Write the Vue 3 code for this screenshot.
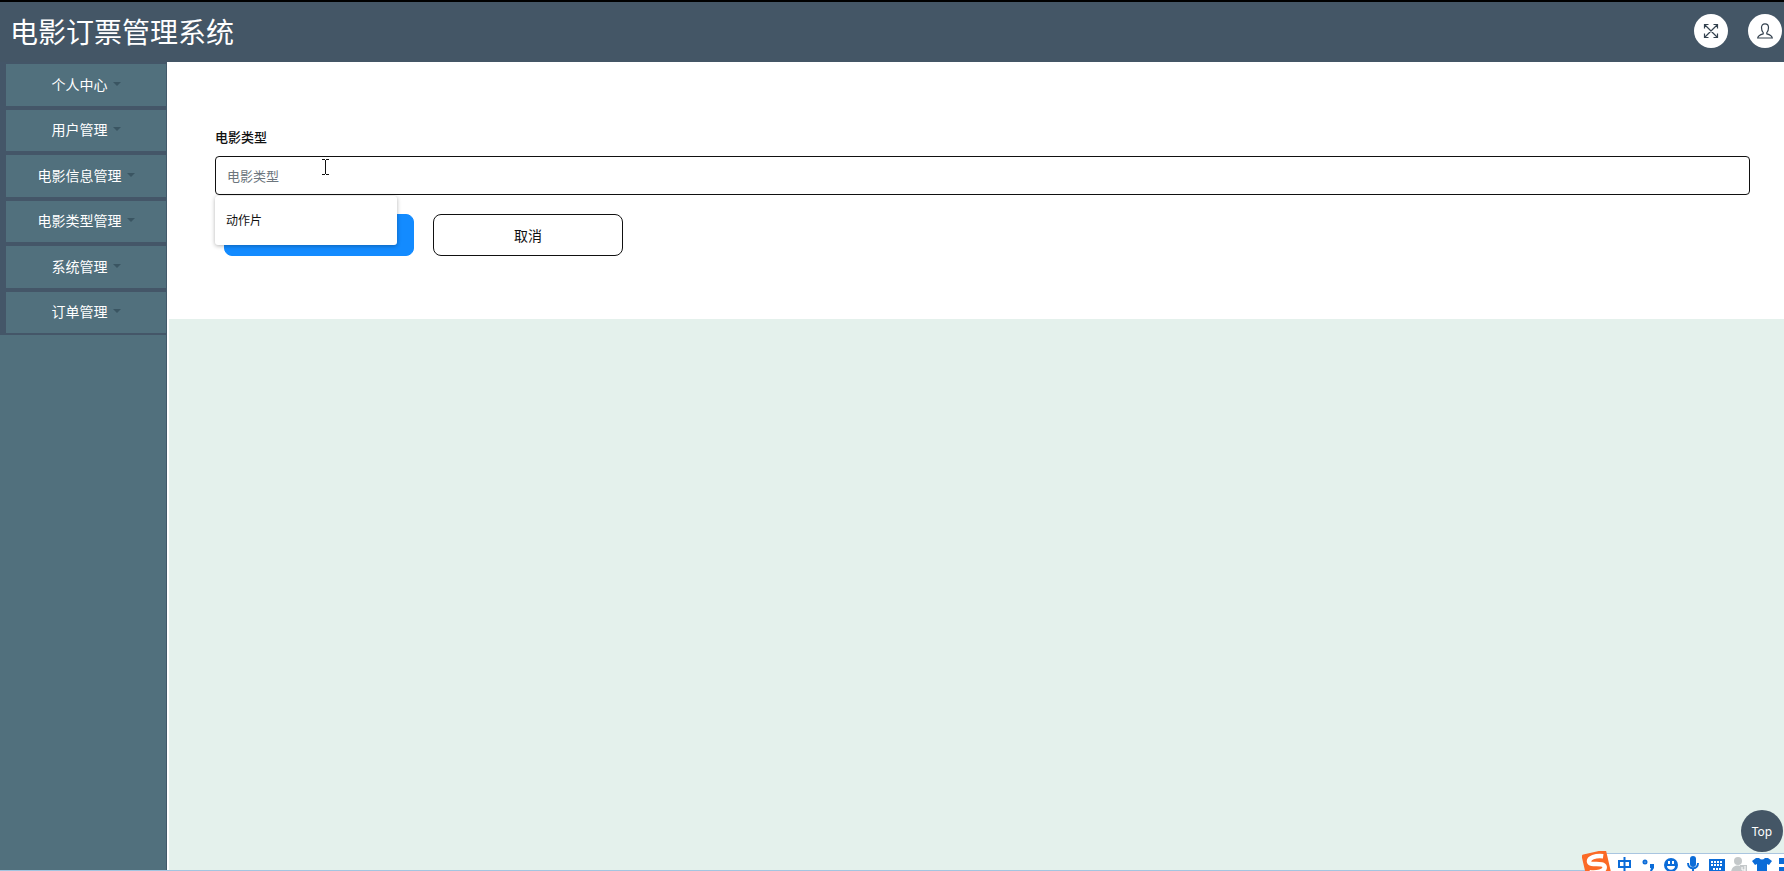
<script setup>
const menu = ['个人中心', '用户管理', '电影信息管理', '电影类型管理', '系统管理', '订单管理']
</script>

<template>
  <div class="page">
    <header class="header">
      <h1>电影订票管理系统</h1>
      <div class="tools">
        <button class="round" type="button" aria-label="全屏">
          <svg width="16" height="16" viewBox="0 0 16 16" fill="none" stroke="#34424f" stroke-width="1.2">
            <path d="M1.5 5.5v-4h4M10.5 1.5h4v4M14.5 10.5v4h-4M5.5 14.5h-4v-4M1.5 1.5l13 13M14.5 1.5l-13 13" />
          </svg>
        </button>
        <button class="round" type="button" aria-label="个人">
          <svg width="16" height="16" viewBox="0 0 16 16" fill="none" stroke="#34424f" stroke-width="1.2">
            <path d="M6.2 9.6C4.8 8.5 4.5 6.5 4.5 4.6 4.5 2.2 5.8.8 8 .8s3.500 1.400 3.500 3.800c0 1.900-.3 3.900-1.700 5v1.200c3 .8 5.200 1.600 5.500 4.200H.7c.3-2.600 2.500-3.400 5.500-4.200z" />
          </svg>
        </button>
      </div>
    </header>

    <div class="body">
      <aside class="sidebar">
        <nav class="menu">
          <button v-for="item in menu" :key="item" class="item" type="button">
            {{ item }}<span class="caret"></span>
          </button>
        </nav>
      </aside>

      <main class="main">
        <form class="panel" @submit.prevent>
          <label for="type">电影类型</label>
          <div class="field">
            <input id="type" type="text" placeholder="电影类型" autocomplete="off" />
            <ul class="suggest">
              <li>动作片</li>
            </ul>
            <svg class="cursor" width="7" height="16" viewBox="0 0 7 16" fill="none" stroke="#111" stroke-width="1">
              <path d="M0 .5h3M4 .5h3M3.5 1v14M0 15.5h3M4 15.5h3" />
            </svg>
          </div>
          <div class="actions">
            <button class="btn primary" type="submit" aria-label="提交"></button>
            <button class="btn" type="button">取消</button>
          </div>
        </form>
      </main>
    </div>

    <button class="top" type="button">Top</button>

    <div class="edge"></div>
    <div class="ime">
      <svg width="202" height="22" viewBox="0 0 202 22">
        <g transform="rotate(-13 14 14)">
          <rect x="2" y="1" width="25" height="27" rx="2" fill="#fb6a26" />
          <path d="M23 7C16 4.500 8 5 8 9.500s14 3 14 8-10 4.500-16 2" fill="none" stroke="#fff" stroke-width="4.500" />
        </g>
        <g fill="none" stroke="#0b6cd8" stroke-width="2">
          <path d="M37 10h11v6H37zM42.5 6v16" />
          <circle cx="63" cy="11" r="1.500" />
        </g>
        <g fill="#0b6cd8">
          <path d="M68 13h4v4l-2 3h-2l1-3h-1z" />
          <circle cx="89" cy="14" r="7" />
          <path d="M108 8a3 3 0 0 1 6 0v5a3 3 0 0 1-6 0z" />
          <path d="M127 8h16v13h-16z" />
          <path d="M174 7h3q3 3 6 0h3l4 3-3 4-2-1v9h-10v-9l-2 1-3-4z" />
          <path d="M197 7h5v6h-5zM197 16h5v6h-5z" />
        </g>
        <path d="M106 12c0 7 10 7 10 0M111 17v5" fill="none" stroke="#0b6cd8" stroke-width="2" />
        <path d="M85 15h8c0 5-8 5-8 0zM86 10h2v3h-2zM90 10h2v3h-2z" fill="#fff" />
        <path d="M129 11h12M129 14h12M131 18h8" fill="none" stroke="#fff" stroke-width="2" stroke-dasharray="2 1" />
        <g fill="#c4c8ca">
          <circle cx="156" cy="10" r="4" />
          <path d="M149 22c0-8 8-9 11-6v6z" />
          <path d="M158 14h7v8h-7z" />
        </g>
        <path d="M160 16v3h3M163 15v5" fill="none" stroke="#fff" stroke-width="1" />
      </svg>
    </div>
  </div>
</template>

<style>
body {
  margin: 0;
}
</style>

<style scoped>
.page {
  display: flex;
  flex-direction: column;
  min-height: 100vh;
  position: relative;
  overflow: hidden;
  background: #e4f1ec;
  color: #111;
  font-family: 'Noto Sans', 'Noto Sans CJK SC', sans-serif;
}
.page *,
.page {
  box-sizing: border-box;
}
button,
input {
  font: inherit;
  margin: 0;
}
.header {
  display: flex;
  align-items: flex-start;
  justify-content: space-between;
  height: 62px;
  padding: 10px 2px 0 10px;
  border-top: 2px solid #000;
  background: #445666;
}
h1 {
  margin: 0;
  color: #fff;
  font-size: 28px;
  font-weight: 400;
  line-height: 40px;
}
.tools {
  display: flex;
  gap: 20px;
  padding-top: 2px;
}
.round {
  display: flex;
  align-items: center;
  justify-content: center;
  width: 34px;
  height: 34px;
  padding: 0;
  border: 0;
  border-radius: 50%;
  background: #fff;
}
.body {
  display: flex;
  flex: 1;
}
.sidebar {
  width: 167px;
  flex: none;
  background: #51707d;
  border-right: 1px solid #42596a;
}
.menu {
  display: flex;
  flex-direction: column;
  gap: 4px;
  min-height: 273px;
  padding: 2px 0 2px 6px;
  background: #445668;
}
.item {
  display: flex;
  flex: 1;
  align-items: center;
  justify-content: center;
  gap: 5px;
  padding: 0 6px 2px;
  border: 0;
  background: #51707d;
  color: #fff;
  font-size: 14px;
}
.caret {
  border: 4px solid transparent;
  border-top-color: #3a5562;
  border-bottom: 0;
}
.main {
  flex: 1;
  min-width: 0;
  border-left: 2px solid #fff;
}
.panel {
  padding: 65px 34px 63px 46px;
  background: #fff;
}
label {
  display: block;
  margin-bottom: 9px;
  font-size: 13px;
  font-weight: 500;
  line-height: 20px;
}
.field {
  position: relative;
}
input {
  display: block;
  width: 100%;
  height: 39px;
  padding: 0 11px;
  border: 1px solid #111;
  border-radius: 4px;
  background: #fff;
  font-size: 13px;
}
input::placeholder {
  color: #6c757d;
  opacity: 1;
}
.suggest {
  position: absolute;
  top: 100%;
  left: 0;
  z-index: 1;
  width: 182px;
  margin: 1px 0 0;
  padding: 12px 11px;
  border-radius: 3px;
  background: #fff;
  box-shadow: 0 1px 4px rgba(0, 0, 0, 0.3);
  font-size: 12px;
  line-height: 25px;
  list-style: none;
}
.cursor {
  position: absolute;
  top: 3px;
  left: 107px;
}
.actions {
  display: flex;
  gap: 19px;
  margin: 19px 0 0 9px;
}
.btn {
  width: 190px;
  height: 42px;
  border: 1px solid #111;
  border-radius: 8px;
  background: #fff;
  color: #111;
  font-size: 14px;
}
.btn.primary {
  border-color: #138bff;
  background: #138bff;
}
.top {
  position: absolute;
  right: 1px;
  bottom: 19px;
  width: 42px;
  height: 42px;
  padding: 0;
  border: 0;
  border-radius: 50%;
  background: #445666;
  color: #fff;
  font-size: 12px;
}
.edge {
  position: absolute;
  right: 0;
  bottom: 0;
  left: 0;
  height: 1px;
  background: #a3c5e0;
}
.ime {
  position: absolute;
  right: 0;
  bottom: 0;
  width: 188px;
  height: 18px;
  border-top: 1px solid #a9c5e0;
  background: #fff;
}
.ime svg {
  position: absolute;
  right: 0;
  bottom: -2px;
}
</style>
